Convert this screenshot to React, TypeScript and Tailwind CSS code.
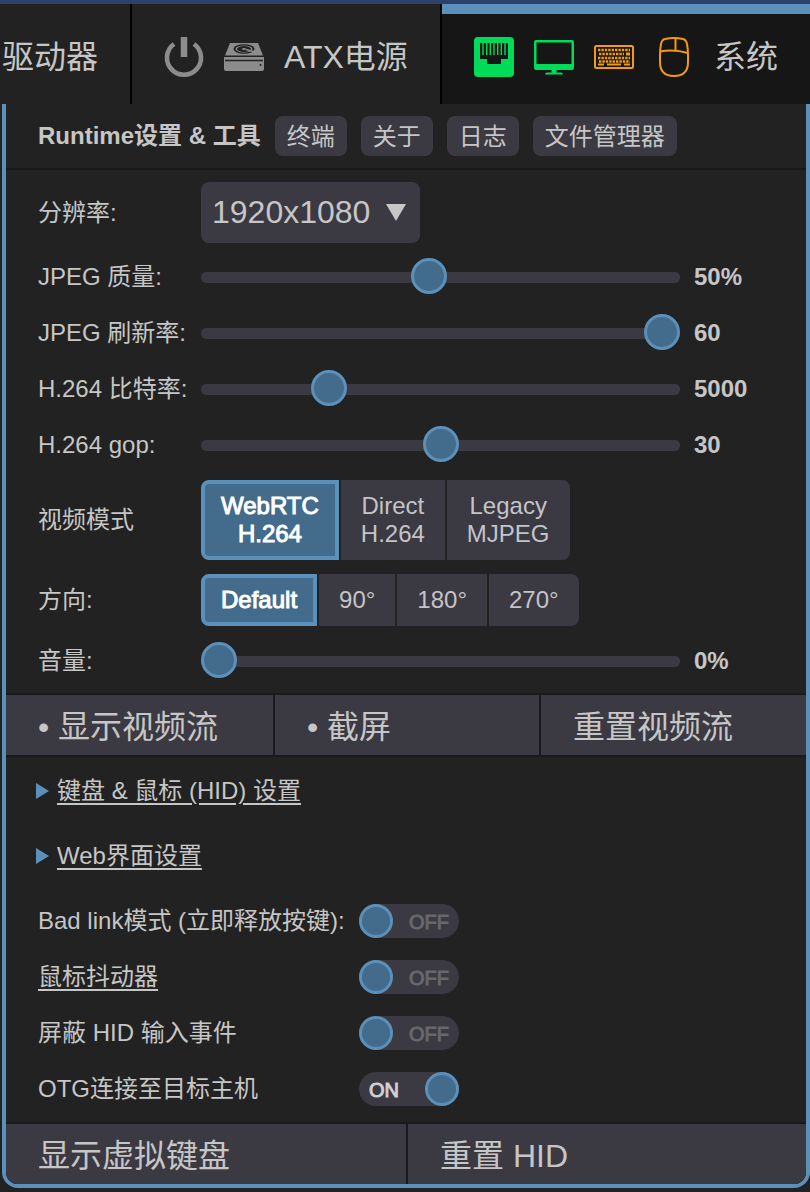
import React, { useState } from 'react';

const SLIDER =
  "block h-9 min-w-0 flex-1 cursor-pointer appearance-none bg-transparent [&::-webkit-slider-runnable-track]:h-[11px] [&::-webkit-slider-runnable-track]:rounded-[5px] [&::-webkit-slider-runnable-track]:bg-[#3b3941] [&::-webkit-slider-thumb]:-mt-[14px] [&::-webkit-slider-thumb]:size-9 [&::-webkit-slider-thumb]:appearance-none [&::-webkit-slider-thumb]:rounded-full [&::-webkit-slider-thumb]:border-[3px] [&::-webkit-slider-thumb]:border-[#5b90bb] [&::-webkit-slider-thumb]:bg-[#436b8b]";

function PowerIcon() {
  return (
    <svg viewBox="0 0 40 40" className="size-10" fill="none" stroke="#8c8c8c" aria-hidden="true">
      <path d="M10 7 A17 17 0 1 0 30 7" strokeWidth="4.600" />
      <path d="M20 0V20" strokeWidth="6.500" />
    </svg>
  );
}

function DriveIcon() {
  return (
    <svg viewBox="0 0 40 40" className="size-10" aria-hidden="true">
      <path d="M6 6H34L39 18.500H1Z" fill="#8c8c8c" />
      <path d="M0 20H40V32Q40 34 38 34H2Q0 34 0 32Z" fill="#8c8c8c" />
      <path d="M1 23.500H39" stroke="#222" strokeWidth="1.500" />
      <ellipse cx="20" cy="12" rx="10.500" ry="4.800" fill="#222" />
      <ellipse cx="20" cy="12" rx="8.500" ry="3.400" fill="#8c8c8c" />
      <ellipse cx="20" cy="12" rx="7" ry="3" fill="#222" />
      <ellipse cx="20" cy="12" rx="2.200" ry="1.100" fill="#8c8c8c" />
      <path d="M22 12.500L31 15" stroke="#8c8c8c" strokeWidth="1.500" />
      <circle cx="36.500" cy="28" r="1" fill="#222" />
    </svg>
  );
}

function EthernetIcon() {
  return (
    <svg viewBox="0 0 40 40" className="size-10" aria-hidden="true">
      <rect width="40" height="40" rx="4" fill="#00dc5a" />
      <path d="M6 6H34V22H27V27H13V22H6Z" fill="#161616" />
      <path d="M9 6V18M12.700 6V18M16.300 6V18M20 6V18M23.700 6V18M27.300 6V18M31 6V18" stroke="#00dc5a" strokeWidth="1.400" />
    </svg>
  );
}

function ScreenIcon() {
  return (
    <svg viewBox="0 0 40 40" className="size-10" aria-hidden="true">
      <path fillRule="evenodd" fill="#00dc5a" d="M2 3H38Q40 3 40 5V31Q40 33 38 33H22.500V35.500H27Q29 35.500 29 37.500H11Q11 35.500 13 35.500H17.500V33H2Q0 33 0 31V5Q0 3 2 3ZM2.500 5.500V27H37.500V5.500Z" />
    </svg>
  );
}

function KeyboardIcon() {
  return (
    <svg viewBox="0 0 40 40" className="size-10" fill="none" stroke="#f29a11" aria-hidden="true">
      <rect x="1" y="9" width="38" height="22" rx="1.500" strokeWidth="2" />
      <path d="M4 13H36M5 17H30M4 21H36M5 24.500H36" strokeWidth="2.400" strokeDasharray="2.400 1" />
      <path d="M4 27.500H10M13 27.500H27M30 27.500H36" strokeWidth="2" />
      <path d="M32 17H36" strokeWidth="3" />
    </svg>
  );
}

function MouseIcon() {
  return (
    <svg viewBox="0 0 40 40" className="size-10" fill="none" stroke="#f29a11" strokeWidth="2" aria-hidden="true">
      <path d="M11 2Q20 0 29 2Q32 2.500 33 7Q34 12 34 18V25Q34 39 20 39Q6 39 6 25V18Q6 12 7 7Q8 2.500 11 2Z" />
      <path d="M6 14.500Q20 12 34 16M21.500 1V13.500" />
    </svg>
  );
}

function SliderRow({ id, label, min, max, initial, suffix = '' }: { id: string; label: string; min: number; max: number; initial: number; suffix?: string }) {
  const [value, setValue] = useState(initial);
  return (
    <div className="flex h-14 items-center">
      <label htmlFor={id} className="w-[163px] shrink-0">{label}</label>
      <input id={id} type="range" min={min} max={max} value={value} onChange={(e) => setValue(Number(e.target.value))} className={SLIDER} />
      <output htmlFor={id} className="ml-[14px] w-[80px] shrink-0 font-bold">{value}{suffix}</output>
    </div>
  );
}

function Segments({ name, options }: { name: string; options: string[][] }) {
  const [active, setActive] = useState(0);
  return (
    <div role="radiogroup" aria-label={name} className="flex gap-[2px]">
      {options.map((lines, i) => (
        <label
          key={lines.join(' ')}
          className={
            'flex cursor-pointer flex-col justify-center border-4 px-4 py-2 text-center leading-7 first:rounded-l-lg last:rounded-r-lg ' +
            (i === active ? 'border-[#5b90bb] bg-[#436b8b] text-white [-webkit-text-stroke:1px_#fff]' : 'border-[#3b3941] bg-[#3b3941] text-[#c4c4c8]')
          }
        >
          <input type="radio" name={name} checked={i === active} onChange={() => setActive(i)} className="sr-only" />
          {lines.map((line) => (
            <span key={line}>{line}</span>
          ))}
        </label>
      ))}
    </div>
  );
}

function ToggleRow({ id, label, initial = false, underlined = false }: { id: string; label: string; initial?: boolean; underlined?: boolean }) {
  const [on, setOn] = useState(initial);
  return (
    <div className="flex h-14 items-center">
      <label htmlFor={id} className={'w-[321px] shrink-0 whitespace-nowrap ' + (underlined ? 'underline decoration-2 underline-offset-4' : '')}>
        {label}
      </label>
      <label className={'flex h-[34px] w-[100px] cursor-pointer items-center justify-between rounded-full bg-[#3b3941] text-xl ' + (on ? 'flex-row-reverse' : '')}>
        <input id={id} type="checkbox" checked={on} onChange={(e) => setOn(e.target.checked)} className="sr-only" />
        <span className="size-[34px] rounded-full border-[3px] border-[#5b90bb] bg-[#436b8b]" />
        {on ? (
          <span className="pt-[2px] pl-[10px] text-[#d0d0d4] [-webkit-text-stroke:1px_#d0d0d4]">ON</span>
        ) : (
          <span className="pt-[2px] pr-[10px] text-[#67676e] [-webkit-text-stroke:1px_#67676e]">OFF</span>
        )}
      </label>
    </div>
  );
}

export default function App() {
  return (
    <div className="min-h-screen bg-[#222] font-['Liberation_Sans','Noto_Sans_CJK_SC',sans-serif] text-2xl text-[#c6c6c6]">
      <nav className="flex h-[104px] overflow-hidden border-t-4 border-[#2c416b] text-[32px] leading-10">
        <button className="flex w-[132px] shrink-0 items-center border-r-2 border-black pt-[6px] pl-[2px] whitespace-nowrap">驱动器</button>
        <button className="flex w-[310px] shrink-0 items-center gap-5 border-r-2 border-black pt-[6px] pl-8 whitespace-nowrap">
          <PowerIcon />
          <DriveIcon />
          <span>ATX电源</span>
        </button>
        <button className="flex flex-1 items-center gap-5 border-t-[10px] border-[#5b90bb] bg-[#161616] pb-1 pl-8 whitespace-nowrap">
          <EthernetIcon />
          <ScreenIcon />
          <KeyboardIcon />
          <MouseIcon />
          <span>系统</span>
        </button>
      </nav>

      <main className="ml-[2px] overflow-hidden rounded-b-2xl border-x-4 border-b-4 border-[#5b90bb]">
        <header className="flex h-[66px] items-center gap-[14px] border-b-2 border-[#19191b] pl-8 whitespace-nowrap">
          <h1 className="font-bold">Runtime设置 &amp; 工具</h1>
          {['终端', '关于', '日志', '文件管理器'].map((t) => (
            <button key={t} className="h-10 rounded-lg bg-[#3b3941] px-3 pt-[2px]">{t}</button>
          ))}
        </header>

        <section className="px-8">
          <div className="flex h-[79px] items-center pt-[6px]">
            <label htmlFor="resolution" className="w-[163px] shrink-0">分辨率:</label>
            <div className="relative">
              <select id="resolution" className="h-[61px] w-[219px] cursor-pointer appearance-none rounded-lg bg-[#3b3941] pl-[11px] text-[32px]">
                <option>1920x1080</option>
              </select>
              <svg viewBox="0 0 20 17" className="pointer-events-none absolute top-[22px] right-[14px] h-[17px] w-5" fill="#c6c6c6" aria-hidden="true">
                <path d="M0 0H20L10 17Z" />
              </svg>
            </div>
          </div>
          <SliderRow id="quality" label="JPEG 质量:" min={5} max={100} initial={50} suffix="%" />
          <SliderRow id="fps" label="JPEG 刷新率:" min={0} max={60} initial={60} />
          <SliderRow id="bitrate" label="H.264 比特率:" min={25} max={20000} initial={5000} />
          <SliderRow id="gop" label="H.264 gop:" min={0} max={60} initial={30} />
          <div className="flex items-center pt-[7px]">
            <span className="w-[163px] shrink-0">视频模式</span>
            <Segments name="视频模式" options={[['WebRTC', 'H.264'], ['Direct', 'H.264'], ['Legacy', 'MJPEG']]} />
          </div>
          <div className="flex items-center pt-[14px] pb-[7px]">
            <span className="w-[163px] shrink-0">方向:</span>
            <Segments name="方向" options={[['Default'], ['90°'], ['180°'], ['270°']]} />
          </div>
          <SliderRow id="volume" label="音量:" min={0} max={100} initial={0} suffix="%" />
        </section>

        <div className="mt-1 grid h-[64px] grid-cols-[267fr_264fr_265fr] gap-[2px] border-y-2 border-[#1a191e] bg-[#1a191e] text-[32px]">
          {['• 显示视频流', '• 截屏', '重置视频流'].map((t) => (
            <button key={t} className="bg-[#3b3941] pt-1 pl-8 text-left whitespace-nowrap">{t}</button>
          ))}
        </div>

        <section className="px-8 pt-px">
          {['键盘 & 鼠标 (HID) 设置', 'Web界面设置'].map((t) => (
            <button key={t} className="flex h-[65px] items-center gap-2 whitespace-nowrap">
              <svg viewBox="0 0 13 16" className="-ml-[2px] h-4 w-[13px]" fill="#5b90bb" aria-hidden="true">
                <path d="M0 0L13 8L0 16Z" />
              </svg>
              <span className="underline decoration-2 underline-offset-4">{t}</span>
            </button>
          ))}
        </section>

        <section className="px-8 py-[5px]">
          <ToggleRow id="badlink" label="Bad link模式 (立即释放按键):" />
          <ToggleRow id="jiggler" label="鼠标抖动器" underlined />
          <ToggleRow id="mute" label="屏蔽 HID 输入事件" />
          <ToggleRow id="otg" label="OTG连接至目标主机" initial />
        </section>

        <div className="grid h-[62px] grid-cols-[400fr_398fr] gap-[2px] border-t-2 border-[#1a191e] bg-[#1a191e] text-[32px]">
          {['显示虚拟键盘', '重置 HID'].map((t) => (
            <button key={t} className="bg-[#3b3941] pt-1 pl-8 text-left whitespace-nowrap">{t}</button>
          ))}
        </div>
      </main>
    </div>
  );
}
